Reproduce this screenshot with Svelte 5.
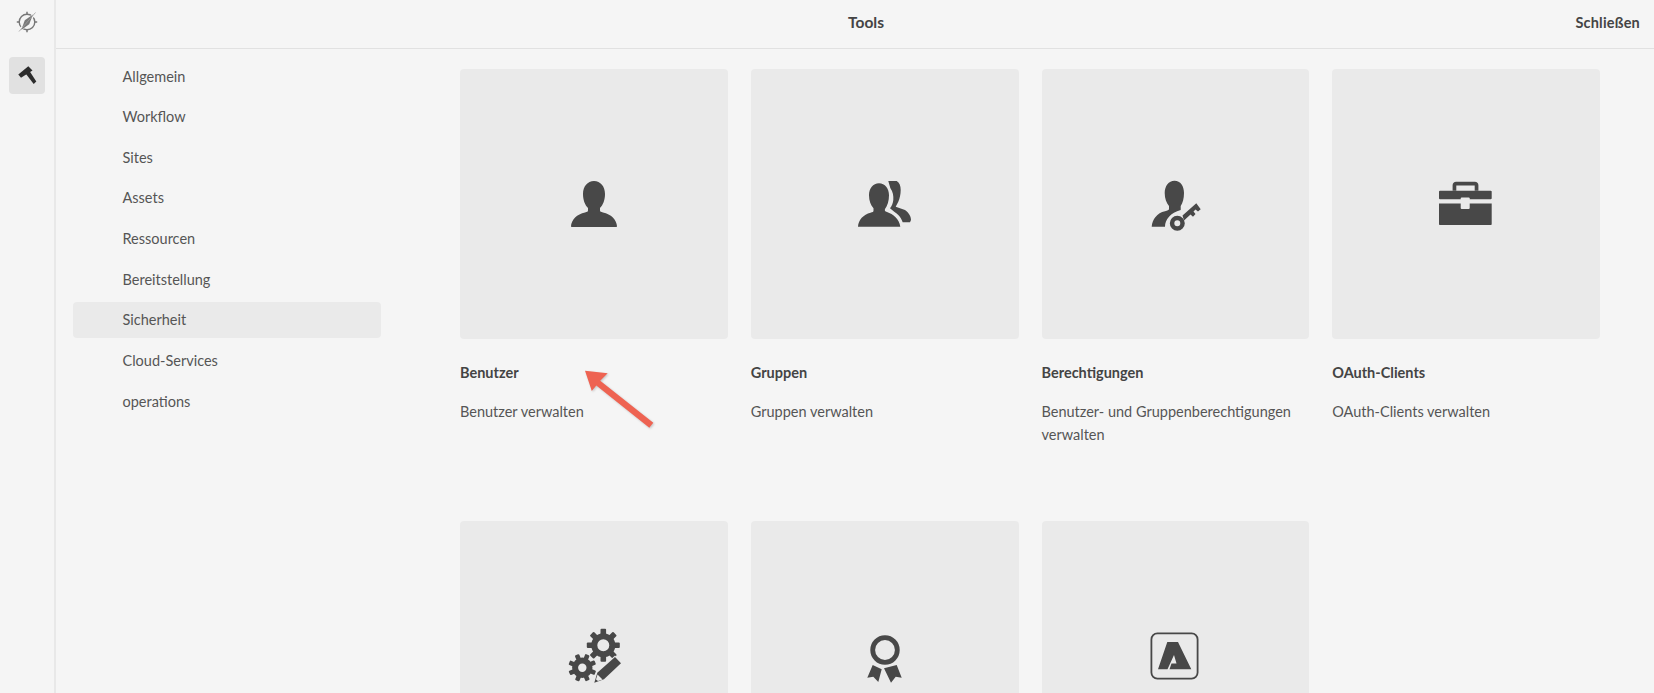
<script>
  const navItems = ['Allgemein', 'Workflow', 'Sites', 'Assets', 'Ressourcen', 'Bereitstellung', 'Sicherheit', 'Cloud-Services', 'operations'];
  const activeNav = 'Sicherheit';

  // second row captions sit below the fold
  const tools = [
    { icon: 'user', title: 'Benutzer', desc: 'Benutzer verwalten' },
    { icon: 'group', title: 'Gruppen', desc: 'Gruppen verwalten' },
    { icon: 'key', title: 'Berechtigungen', desc: 'Benutzer- und Gruppenberechtigungen verwalten' },
    { icon: 'case', title: 'OAuth-Clients', desc: 'OAuth-Clients verwalten' },
    { icon: 'gears' },
    { icon: 'badge' },
    { icon: 'adobe' }
  ];

  const angles = [0, 45, 90, 135, 180, 225, 270, 315];
</script>

<div class="app">
  <aside class="rail">
    <button class="rail-btn" aria-label="Navigation">
      <svg width="24" height="24" viewBox="0 0 24 24">
        <circle cx="12" cy="12" r="7.800" fill="none" stroke="#777" stroke-width="1.400" />
        <path d="M12 1.800v2.600M12 19.600v2.600M1.800 12h2.600M19.600 12h2.600" stroke="#777" stroke-width="1.500" />
        <path d="M4 21.500L20.500 2.500" stroke="#f5f5f5" stroke-width="3.400" />
        <path d="M18 4.500l-3.800 9.700-8 5.800 3.600-9.800z" fill="#7a7a7a" />
        <path d="M4 21.500L20.500 2.500" stroke="#a0a0a0" stroke-width="0.800" />
      </svg>
    </button>
    <button class="rail-btn active" aria-label="Tools">
      <svg width="24" height="24" viewBox="0 0 24 24">
        <path d="M3.300 10.500L13.300 2.200l4.200 4.300L6 13.800z" fill="#2c2c2c" />
        <path d="M11 10l3.500-3 6.800 10.500-2.600 2.500z" fill="#2c2c2c" />
      </svg>
    </button>
  </aside>

  <div class="main">
    <header class="topbar">
      <span></span>
      <h1>Tools</h1>
      <button class="close">Schließen</button>
    </header>

    <div class="body">
      <nav class="nav">
        {#each navItems as item}
          <button class="nav-item" class:active={item === activeNav}>{item}</button>
        {/each}
      </nav>

      <div class="cards">
        {#each tools as tool}
          <article class="tool">
            <div class="thumb">
              <svg width="60" height="60" viewBox="0 0 60 60" fill="#484848">
                {#if tool.icon === 'user'}
                  <path d="M30 7c-6.500 0-11 5.500-11 13 0 6 2 11 5 14v2.500c0 1-1 1.500-3 2C13 40 7.300 46 7 52.200l.4.800h45.200l.4-.8C52.700 46 47 40 39 38.500c-2-.5-3-1-3-2V34c3-3 5-8 5-14 0-7.500-4.500-13-11-13z" />
                {:else if tool.icon === 'group'}
                  <path d="M24 9.300c-6 0-10 5-10 12 0 5.500 1.800 10 4.500 13v2.500c0 1-1 1.500-3 2C8.500 40.500 3.300 46 3 52.700h42.300C44.500 45 38 40 32 38c-2-.5-2.500-1.500-2-3 2.500-3.500 4-8 4-13.700 0-7-4-12-10-12z" />
                  <path d="M33.300 7h8.400c2.800 1.500 4 5 4 9 0 4.500-1 8.500-2.400 11.700l-2.600 5L50 36c3.500 2.500 6 6 6 10l-1 2.300h-7.300c-1-3-2.500-5.300-4.400-7.300-2.500-2.500-5.500-4-8.300-6.700 1.800-2.500 3-5 3.300-8.300.3-4-.2-8-3-12z" />
                {:else if tool.icon === 'key'}
                  <path d="M29.500 6.700c-5.800 0-9.800 5.300-9.800 12.300 0 5.500 1.800 10 4.300 13v3c0 1-1.500 1.700-4 2.300C12 39 7.300 45.500 6.700 52.700H20c0-7 5.500-14 15.700-16.700V32c2-3 3.300-7.500 3.300-13 0-7-3.500-12.300-9.500-12.300z" />
                  <path fill-rule="evenodd" d="M32.300 41.800a7.500 7.500 0 1 0 0 15 7.500 7.500 0 0 0 0-15zm0 4.500a3 3 0 1 1 0 6 3 3 0 0 1 0-6z" />
                  <path d="M37.500 41.500L51.300 29.300l4.400 6-2.700 2.200-2.500-2-2 2 2 2.500-2.500 2.700-2.500-2.200-6.500 6z" />
                {:else if tool.icon === 'case'}
                  <path d="M16.600 16.700v-5.500c0-2 1.500-3.500 3.500-3.500h18.800c2 0 3.500 1.500 3.500 3.500v5.500h-3.700v-5.300H20.300v5.300z" />
                  <rect x="3" y="16.700" width="52.700" height="8.600" rx="1" />
                  <path d="M3 29.500h52.700V50c0 .6-.5 1-1 1H4c-.5 0-1-.4-1-1z" />
                  <rect x="24.700" y="23.500" width="9" height="11.500" rx="1" fill="#eaeaea" />
                {:else if tool.icon === 'gears'}
                  {#each angles as a}
                    <rect x="36.500" y="2.800" width="5.600" height="8" rx="1" transform="rotate({a} 39.300 19.300)" />
                    <rect x="16" y="27.700" width="4.600" height="6.500" rx="1" transform="rotate({a + 22} 18.300 41.700)" />
                  {/each}
                  <circle cx="39.300" cy="19.300" r="9" fill="none" stroke="#484848" stroke-width="6" />
                  <circle cx="18.300" cy="41.700" r="7.200" fill="none" stroke="#484848" stroke-width="6" />
                  <path d="M51 31l6 6.300-17 16-9.700 3.400 3-10z" stroke="#eaeaea" stroke-width="2" paint-order="stroke" />
                  <path d="M33.500 48.500l5 5-4.500 1.500-2-1.500z" fill="#eaeaea" />
                {:else if tool.icon === 'badge'}
                  <circle cx="30" cy="24" r="12.300" fill="none" stroke="#484848" stroke-width="4.800" />
                  <path d="M17.700 39l9 4.300-3.400 12.700-5-5.300-6 1z" />
                  <path d="M29 42.300L41.700 39l5 12.700-6-1-4.700 6z" />
                {:else if tool.icon === 'adobe'}
                  <rect x="6.400" y="7.400" width="46.200" height="45.200" rx="6" fill="none" stroke="#484848" stroke-width="1.800" />
                  <path d="M22.300 16H33l13.300 27.300H24.500l2-5.800h5L29 29l-6.500 14.300H13z" />
                {/if}
              </svg>
            </div>
            {#if tool.title}
              <h2>{tool.title}</h2>
              <p>{tool.desc}</p>
            {/if}
          </article>
        {/each}
      </div>
    </div>
  </div>

  <svg class="arrow" width="90" height="70" viewBox="575 365 90 70">
    <path d="M585 370.700l22.700 2.600-7.500 7.400 53.100 42-4 5-53-42.300-4.500 5.600z" fill="#ee6352" />
  </svg>
</div>

<style>
  :global(body) {
    margin: 0;
    background: #f5f5f5;
  }

  .app {
    position: relative;
    display: flex;
    height: 100vh;
    overflow: hidden;
    background: #f5f5f5;
    color: #4b4b4b;
    font-family: Lato, "Open Sans", sans-serif;
    font-size: 14.5px;
  }

  button {
    border: 0;
    background: none;
    padding: 0;
    font: inherit;
    color: inherit;
    cursor: pointer;
  }

  .rail {
    flex: 0 0 54px;
    display: flex;
    flex-direction: column;
    align-items: center;
    gap: 17px;
    padding: 3px 0 0 0;
    border-right: 2px solid #e8e8e8;
  }

  .rail-btn {
    display: flex;
    align-items: center;
    justify-content: center;
    width: 36px;
    height: 37px;
    border-radius: 4px;
  }

  .rail-btn.active {
    background: #e1e1e1;
  }

  .main {
    flex: 1;
    min-width: 0;
    display: flex;
    flex-direction: column;
  }

  .topbar {
    flex: 0 0 49px;
    box-sizing: border-box;
    display: grid;
    grid-template-columns: 1fr auto 1fr;
    align-items: center;
    padding: 0 14px 4px 36px;
    border-bottom: 1px solid #e1e1e1;
  }

  .topbar h1 {
    margin: 0;
    font-size: 15.5px;
    font-weight: 700;
    color: #444;
  }

  .close {
    justify-self: end;
    font-weight: 700;
    letter-spacing: 0.2px;
    color: #444;
  }

  .body {
    display: flex;
    align-items: flex-start;
  }

  .nav {
    flex: 0 0 308px;
    display: flex;
    flex-direction: column;
    gap: 4.67px;
    margin: 9px 0 0 17px;
  }

  .nav-item {
    height: 36px;
    padding-left: 49.500px;
    text-align: left;
    border-radius: 4px;
    color: #555;
  }

  .nav-item.active {
    background: #eaeaea;
  }

  .cards {
    display: grid;
    grid-template-columns: repeat(4, 267.750px);
    column-gap: 23px;
    row-gap: 75px;
    margin: 20px 0 0 79px;
  }

  .thumb {
    display: flex;
    align-items: center;
    justify-content: center;
    height: 270px;
    border-radius: 4px;
    background: #eaeaea;
  }

  .tool h2 {
    margin: 24px 0 0;
    font-size: 14.5px;
    line-height: 20px;
    font-weight: 700;
    color: #444;
  }

  .tool p {
    margin: 17px 0 0;
    line-height: 23px;
    min-height: 46px;
    color: #555;
  }

  .arrow {
    position: absolute;
    left: 575px;
    top: 365px;
    filter: drop-shadow(1px 1px 1px rgba(0, 0, 0, 0.2));
  }
</style>
